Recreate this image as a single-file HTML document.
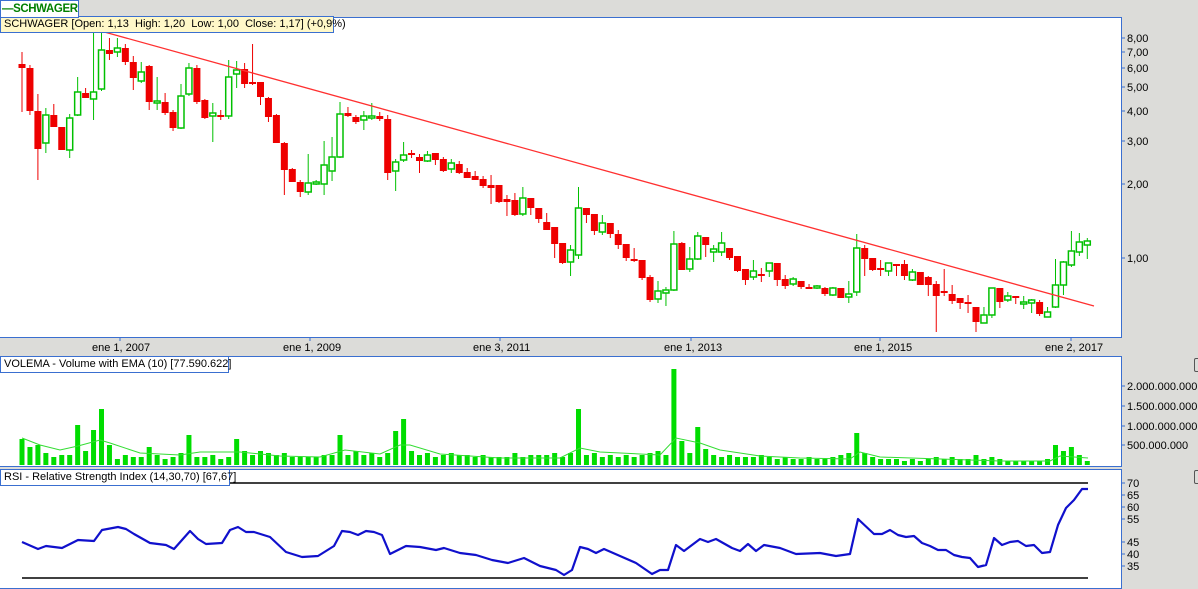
<!DOCTYPE html>
<html><head><meta charset="utf-8"><style>
body{margin:0;width:1198px;height:580px;background:#dcdcd9;position:relative;overflow:hidden;font-family:"Liberation Sans",sans-serif}
.pan{position:absolute;background:#fff;border:1px solid #3a6fd0;box-sizing:border-box}
.lbl{position:absolute;background:#fff8c8;border:1px solid #3a6fd0;font-size:11px;line-height:14px;padding:0 3px;white-space:nowrap;color:#000;box-sizing:border-box;height:17px}
.ax{position:absolute;font-size:11px;color:#000}
svg{position:absolute;left:0;top:0}
</style></head><body>
<div style="position:absolute;left:0;top:0;width:79px;height:18px;border:1px solid #3a6fd0;box-sizing:border-box;background:#fff;color:#008000;font-weight:bold;font-size:11.5px;letter-spacing:-0.4px;line-height:16px;padding-left:1px;white-space:nowrap;overflow:hidden;z-index:5">—SCHWAGER</div>
<div class="pan" style="left:-1px;top:17px;width:1123px;height:321px"></div>
<div class="pan" style="left:-1px;top:356px;width:1123px;height:111px"></div>
<div class="pan" style="left:-1px;top:469px;width:1123px;height:120px"></div>
<svg id="s" width="1198" height="580"></svg>
<div class="lbl" style="left:0;top:16px;width:334px">SCHWAGER [Open: 1,13&nbsp; High: 1,20&nbsp; Low: 1,00&nbsp; Close: 1,17] (+0,9%)</div>
<div class="lbl" style="left:0;top:356px;width:229px;background:#fff">VOLEMA - Volume with EMA (10) [77.590.622]</div>
<div class="lbl" style="left:0;top:469px;width:230px;background:#fff">RSI - Relative Strength Index (14,30,70) [67,67]</div>
<div class="ax" style="left:92px;top:342px">ene 1, 2007</div>
<div class="ax" style="left:283px;top:342px">ene 1, 2009</div>
<div class="ax" style="left:473px;top:342px">ene 3, 2011</div>
<div class="ax" style="left:664px;top:342px">ene 1, 2013</div>
<div class="ax" style="left:854px;top:342px">ene 1, 2015</div>
<div class="ax" style="left:1045px;top:342px">ene 2, 2017</div>
<div style="position:absolute;left:1194px;top:358px;width:8px;height:12px;border:1px solid #555;border-radius:2px"></div>
<div style="position:absolute;left:1194px;top:470px;width:8px;height:12px;border:1px solid #555;border-radius:2px"></div>
<script>
var s=document.getElementById('s'),h='';
function T(x,y,t){h+='<text x="'+x+'" y="'+y+'" font-size="11" font-family="Liberation Sans,sans-serif">'+t+'</text>';}
function L(x1,y1,x2,y2,c,w){h+='<line x1="'+x1+'" y1="'+y1+'" x2="'+x2+'" y2="'+y2+'" stroke="'+c+'" stroke-width="'+(w||1)+'"/>';}
[[38,'8,00'],[52,'7,00'],[68,'6,00'],[87,'5,00'],[111,'4,00'],[141,'3,00'],[184,'2,00'],[258,'1,00']].forEach(function(a){L(1121,a[0],1125,a[0],'#3a6fd0');T(1127,a[0]+4,a[1]);});
[[386,'2.000.000.000'],[406,'1.500.000.000'],[426,'1.000.000.000'],[445,'500.000.000']].forEach(function(a){L(1121,a[0],1125,a[0],'#3a6fd0');T(1127,a[0]+4,a[1]);});
[[483,70],[495,65],[507,60],[519,55],[542,45],[554,40],[566,35]].forEach(function(a){L(1121,a[0],1125,a[0],'#3a6fd0');T(1127,a[0]+4,a[1]);});
[120,310,500,691,880,1071].forEach(function(x){L(x,337,x,341,'#3a6fd0');});
var C=[[64,68,52,112],[68,111,65,115],[111,149,94,180],[143,115,108,153],[115,127,104,127],[127,150,127,150],[150,118,114,158],[115,92,77,116],[93,98,88,98],[99,92,32,120],[89,50,30,91],[50,54,38,60],[52,48,38,57],[48,62,44,65],[62,78,56,90],[81,72,62,83],[66,102,65,110],[102,101,77,110],[102,113,93,115],[112,128,110,131],[128,96,84,129],[94,68,63,96],[68,102,65,104],[100,118,99,119],[116,113,103,142],[115,116,110,120],[116,77,60,119],[74,70,61,88],[69,84,63,88],[82,83,44,85],[82,97,82,105],[98,117,97,122],[115,143,114,143],[143,170,142,195],[169,182,168,180],[182,192,180,197],[192,183,154,195],[183,182,180,185],[184,165,141,195],[171,157,137,181],[157,114,102,158],[113,116,107,117],[117,122,115,124],[120,116,111,130],[117,116,103,120],[116,119,112,121],[119,173,115,180],[171,162,159,191],[160,155,142,162],[153,155,150,158],[157,161,154,173],[161,155,151,162],[153,160,153,165],[159,171,157,172],[169,163,159,173],[164,173,161,174],[172,178,168,178],[176,180,171,180],[179,186,176,188],[185,188,175,204],[185,202,185,203],[199,202,195,216],[200,215,193,216],[214,198,187,216],[198,208,198,215],[208,219,208,223],[222,230,213,230],[227,244,227,258],[243,263,243,264],[262,250,245,276],[255,208,187,259],[208,215,208,223],[214,231,214,235],[232,223,215,235],[223,234,223,238],[234,245,230,249],[244,258,244,261],[259,260,248,262],[260,278,260,280],[277,300,275,302],[299,291,281,303],[293,290,287,306],[290,244,231,291],[243,270,242,270],[269,259,247,272],[259,236,232,260],[237,245,237,257],[252,249,245,262],[252,243,232,256],[248,258,248,260],[256,271,256,272],[269,280,269,285],[277,271,260,280],[274,276,268,282],[271,263,263,277],[263,280,263,286],[279,286,275,289],[284,279,277,286],[281,287,281,289],[287,288,284,289],[288,286,285,289],[288,294,287,296],[295,288,287,296],[288,298,288,298],[297,294,281,303],[292,248,234,296],[248,259,245,276],[258,270,258,271],[268,269,260,276],[271,263,263,276],[264,265,264,276],[264,276,260,280],[280,272,269,281],[272,285,272,285],[277,285,276,296],[284,296,281,332],[291,292,269,296],[294,301,285,304],[298,303,298,309],[302,304,295,313],[307,322,307,332],[323,315,307,323],[315,288,288,318],[288,302,288,308],[300,296,292,302],[296,297,296,304],[303,302,296,309],[303,300,299,313],[302,314,300,316],[317,312,307,317],[307,285,259,308],[285,262,261,295],[265,251,231,267],[252,242,233,256],[245,241,238,259]];
C.forEach(function(c,i){var x=22+i*7.95,o=c[0],cl=c[1],up=cl<o,col=up?'#00c000':'#ee0000';
var t=Math.min(o,cl),b=Math.max(o,cl);if(b-t<2)b=t+2;
L(x,c[2],x,t,col);L(x,b,x,c[3],col);
if(up)h+='<rect x="'+(x-3)+'" y="'+t+'" width="6" height="'+(b-t)+'" fill="#fff" stroke="'+col+'" stroke-width="1.5"/>';
else h+='<rect x="'+(x-3.5)+'" y="'+t+'" width="7" height="'+(b-t)+'" fill="'+col+'"/>';});
L(90,28,1094,306,'#ff3030',1.3);
var V=[26,18,20,12,8,10,10,40,14,35,56,20,6,10,8,8,18,10,6,8,12,30,8,8,10,6,8,26,14,10,14,12,10,12,8,8,8,8,10,10,30,10,14,10,12,8,12,34,46,14,10,12,8,10,12,10,10,8,10,8,8,8,12,8,10,10,10,12,8,12,56,10,12,8,10,8,10,8,10,12,14,10,96,24,12,38,16,10,8,10,8,8,8,10,8,6,8,6,6,8,6,6,8,10,12,32,12,8,6,6,6,4,6,4,6,8,6,8,6,6,10,6,8,6,4,4,4,4,4,6,20,14,18,10,4];
V.forEach(function(v,i){var x=22+i*7.95;h+='<rect x="'+(x-2.5)+'" y="'+(465-v)+'" width="5" height="'+v+'" fill="#00dd00"/>';});
h+='<polyline fill="none" stroke="#33dd33" stroke-width="1" points="22,438 40,445 60,450 78,446 100,440 110,443 140,453 180,455 200,452 240,452 280,456 320,457 345,450 380,454 400,445 410,445 440,454 500,458 560,458 580,448 600,452 660,455 676,438 700,443 720,450 760,456 800,458 850,459 860,452 880,457 1000,461 1050,461 1060,456 1088,458"/>';
L(22,483,1088,483,'#000',1.5);L(22,578,1088,578,'#000',1.5);
h+='<polyline fill="none" stroke="#1010cc" stroke-width="2.2" stroke-linejoin="round" points="22,542 38,549 46,546 62,548 78,540 94,541 102,530 118,527 126,529 134,534 150,543 166,545 174,549 190,531 198,539 206,544 222,543 230,530 238,527 246,532 254,532 270,537 286,552 302,557 318,556 334,546 342,531 350,532 358,535 366,531 374,532 382,535 390,554 406,546 420,547 436,550 444,548 460,553 476,555 492,560 508,563 524,558 540,566 556,570 564,575 572,570 580,547 588,549 596,553 604,549 620,556 636,563 652,574 660,570 668,570 676,545 684,551 700,539 708,542 716,539 732,548 740,551 748,544 756,551 764,545 780,548 796,554 820,553 836,556 850,554 858,519 874,534 882,534 890,530 898,535 906,537 914,536 922,543 930,546 938,550 946,550 954,555 962,557 970,558 978,567 986,565 994,538 1002,545 1010,542 1018,541 1026,546 1034,545 1042,553 1050,552 1058,525 1066,508 1074,500 1082,489 1088,489"/>';
s.innerHTML=h;
</script>
</body></html>
